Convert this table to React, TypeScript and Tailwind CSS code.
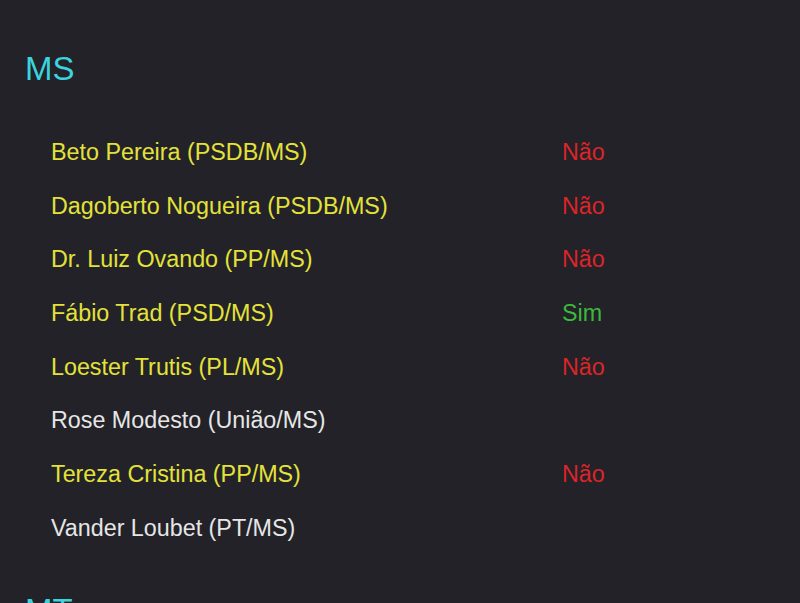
import React from 'react';

interface Vote {
  name: string;
  vote?: 'Sim' | 'Não';
}

const sections: { uf: string; deputies: Vote[] }[] = [
  {
    uf: 'MS',
    deputies: [
      { name: 'Beto Pereira (PSDB/MS)', vote: 'Não' },
      { name: 'Dagoberto Nogueira (PSDB/MS)', vote: 'Não' },
      { name: 'Dr. Luiz Ovando (PP/MS)', vote: 'Não' },
      { name: 'Fábio Trad (PSD/MS)', vote: 'Sim' },
      { name: 'Loester Trutis (PL/MS)', vote: 'Não' },
      { name: 'Rose Modesto (União/MS)' },
      { name: 'Tereza Cristina (PP/MS)', vote: 'Não' },
      { name: 'Vander Loubet (PT/MS)' },
    ],
  },
  {
    uf: 'MT',
    deputies: [],
  },
];

export default function App() {
  return (
    <div
      className="min-h-screen h-[603px] overflow-hidden bg-[#222228] pt-[49px]"
      style={{ fontFamily: '"Liberation Sans", Arial, sans-serif' }}
    >
      {sections.map((section) => (
        <div key={section.uf} className="mb-[35px]">
          <h2 className="pl-[25px] text-[33px] leading-[40px] text-[#3bd3de]">
            {section.uf}
          </h2>
          {section.deputies.length > 0 && (
            <div className="mt-[37px]">
              {section.deputies.map((d) => (
                <div
                  key={d.name}
                  className="flex h-[53.7px] items-center text-[23.3px] leading-[53.7px]"
                >
                  <span
                    className={
                      'w-[562px] pl-[51px] ' +
                      (d.vote ? 'text-[#e4e23a]' : 'text-[#e6e6e6]')
                    }
                  >
                    {d.name}
                  </span>
                  {d.vote && (
                    <span
                      className={
                        d.vote === 'Sim' ? 'text-[#3cb93a]' : 'text-[#dc2529]'
                      }
                    >
                      {d.vote}
                    </span>
                  )}
                </div>
              ))}
            </div>
          )}
        </div>
      ))}
    </div>
  );
}
